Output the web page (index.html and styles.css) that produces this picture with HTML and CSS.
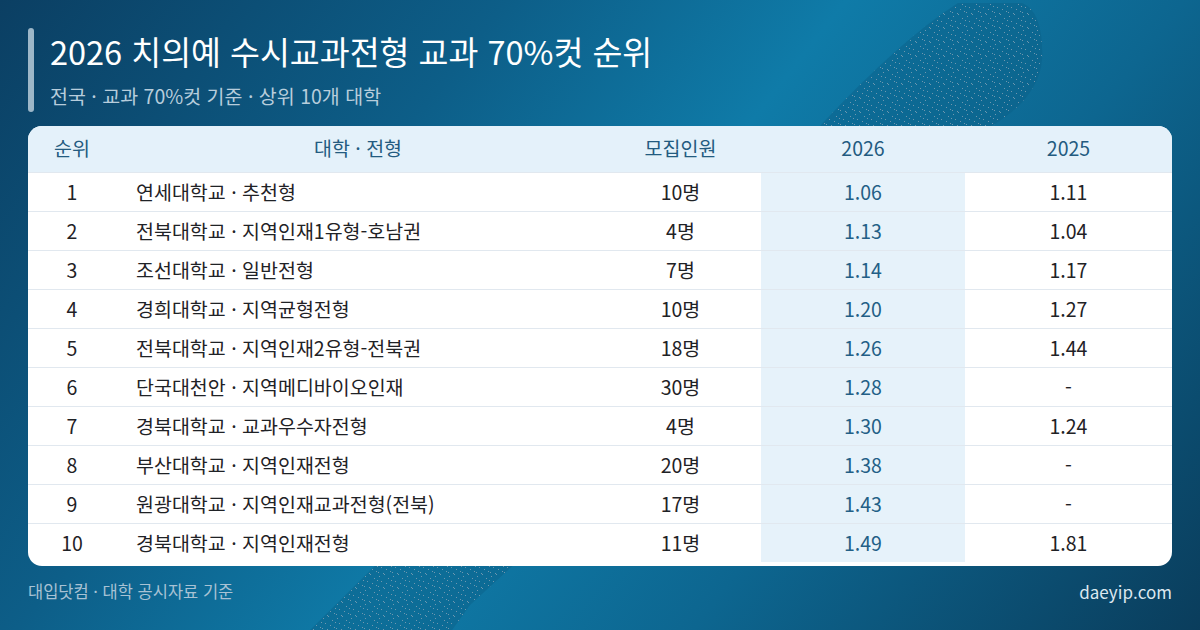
FILE: index.html
```html
<!DOCTYPE html>
<html lang="ko">
<head>
<meta charset="utf-8">
<title>2026 치의예 수시교과전형 교과 70%컷 순위</title>
<link rel="stylesheet" href="styles.css">
</head>
<body>
<div class="page">
  <svg class="blob" width="1200" height="630" viewBox="0 0 1200 630" aria-hidden="true">
    <defs>
      <pattern id="dots" width="14" height="14" patternUnits="userSpaceOnUse">
        <rect x="1" y="2" width="1" height="1" fill="#7f9fb4"/>
        <rect x="6" y="0" width="1" height="1" fill="#7f9fb4"/>
        <rect x="10" y="4" width="1" height="1" fill="#7f9fb4"/>
        <rect x="3" y="7" width="1" height="1" fill="#7f9fb4"/>
        <rect x="8" y="9" width="1" height="1" fill="#7f9fb4"/>
        <rect x="12" y="11" width="1" height="1" fill="#7f9fb4"/>
        <rect x="0" y="12" width="1" height="1" fill="#7f9fb4"/>
        <rect x="5" y="13" width="1" height="1" fill="#7f9fb4"/>
        <rect x="13" y="6" width="1" height="1" fill="#7f9fb4"/>
      </pattern>
    </defs>
    <path d="M300 640 L820 126 Q900 40 958 3 L1022 3 Q1044 12 1042 60 Q1038 100 988 128 L470 605 L445 640 Z" fill="#0a5f88" opacity="0.45"/>
    <path d="M300 640 L820 126 Q900 40 958 3 L1022 3 Q1044 12 1042 60 Q1038 100 988 128 L470 605 L445 640 Z" fill="url(#dots)" opacity="0.85"/>
  </svg>

  <header class="head">
    <div class="bar"></div>
    <div class="titles">
      <h1 class="title">2026 치의예 수시교과전형 교과 70%컷 순위</h1>
      <p class="subtitle">전국 · 교과 70%컷 기준 · 상위 10개 대학</p>
    </div>
  </header>

  <section class="card">
    <table class="rank">
      <colgroup>
        <col class="c-rank"><col class="c-name"><col class="c-num"><col class="c-y26"><col class="c-y25">
      </colgroup>
      <thead>
        <tr><th>순위</th><th>대학 · 전형</th><th>모집인원</th><th class="hl">2026</th><th>2025</th></tr>
      </thead>
      <tbody>
        <tr><td>1</td><td class="name">연세대학교 · 추천형</td><td>10명</td><td class="hl">1.06</td><td>1.11</td></tr>
        <tr><td>2</td><td class="name">전북대학교 · 지역인재1유형-호남권</td><td>4명</td><td class="hl">1.13</td><td>1.04</td></tr>
        <tr><td>3</td><td class="name">조선대학교 · 일반전형</td><td>7명</td><td class="hl">1.14</td><td>1.17</td></tr>
        <tr><td>4</td><td class="name">경희대학교 · 지역균형전형</td><td>10명</td><td class="hl">1.20</td><td>1.27</td></tr>
        <tr><td>5</td><td class="name">전북대학교 · 지역인재2유형-전북권</td><td>18명</td><td class="hl">1.26</td><td>1.44</td></tr>
        <tr><td>6</td><td class="name">단국대천안 · 지역메디바이오인재</td><td>30명</td><td class="hl">1.28</td><td>-</td></tr>
        <tr><td>7</td><td class="name">경북대학교 · 교과우수자전형</td><td>4명</td><td class="hl">1.30</td><td>1.24</td></tr>
        <tr><td>8</td><td class="name">부산대학교 · 지역인재전형</td><td>20명</td><td class="hl">1.38</td><td>-</td></tr>
        <tr><td>9</td><td class="name">원광대학교 · 지역인재교과전형(전북)</td><td>17명</td><td class="hl">1.43</td><td>-</td></tr>
        <tr><td>10</td><td class="name">경북대학교 · 지역인재전형</td><td>11명</td><td class="hl">1.49</td><td>1.81</td></tr>
      </tbody>
    </table>
  </section>

  <footer class="foot">
    <span class="source">대입닷컴 · 대학 공시자료 기준</span>
    <span class="site">daeyip.com</span>
  </footer>
</div>
</body>
</html>
```

FILE: styles.css
```css
* { box-sizing: border-box; }
html, body { margin: 0; padding: 0; }
body {
  width: 1200px;
  height: 630px;
  overflow: hidden;
  font-family: "Noto Sans CJK KR", "Noto Sans", sans-serif;
}
.page {
  position: relative;
  width: 1200px;
  height: 630px;
  padding: 28px 28px 0;
  background: linear-gradient(128deg, #0b3f63 0%, #0d5e88 30%, #0f7ba8 50%, #0d6690 70%, #0a3d5c 100%);
  display: flex;
  flex-direction: column;
}
.blob {
  position: absolute;
  left: 0;
  top: 0;
  pointer-events: none;
}
.head {
  position: relative;
  display: flex;
  gap: 16px;
  height: 84px;
}
.bar {
  width: 6px;
  border-radius: 3px;
  background: #9db7c8;
}
.titles {
  display: flex;
  flex-direction: column;
}
.title {
  margin: 0;
  font-size: 32.5px;
  font-weight: 400;
  line-height: 46px;
  color: #ffffff;
}
.subtitle {
  margin: 9px 0 0;
  font-size: 19.5px;
  line-height: 26px;
  color: #b7cddc;
}
.card {
  position: relative;
  margin-top: 14px;
  background: #ffffff;
  border-radius: 14px;
  overflow: hidden;
  padding-bottom: 4px;
}
.rank {
  width: 100%;
  border-collapse: collapse;
  table-layout: fixed;
  font-size: 19.5px;
}
.c-rank { width: 88px; }
.c-name { width: 484px; }
.c-num { width: 161px; }
.c-y26 { width: 204px; }
.c-y25 { width: 207px; }
.rank thead tr { background: #e4f1fa; }
.rank th {
  height: 46px;
  font-weight: 400;
  color: #235b80;
  text-align: center;
  padding: 0 0 2px;
}
.rank td {
  height: 39px;
  text-align: center;
  color: #1f2226;
  border-top: 1px solid #e1e8ef;
  padding: 0 0 1px;
}
.rank td.name {
  text-align: left;
  padding-left: 20px;
}
.rank td.hl {
  background: #e6f2fa;
  color: #235f86;
}
.foot {
  position: relative;
  display: flex;
  justify-content: space-between;
  align-items: center;
  margin-top: 12px;
  height: 26px;
}
.source {
  font-size: 16.5px;
  color: #a8c2d4;
}
.site {
  font-size: 17px;
  color: #dce8f0;
}
```
